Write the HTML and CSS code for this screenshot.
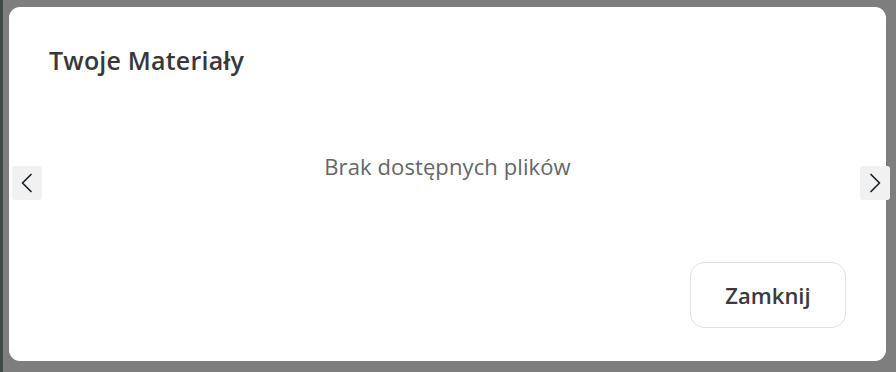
FILE: index.html
```html
<!DOCTYPE html>
<html lang="pl">
<head>
<meta charset="utf-8">
<title>Twoje Materiały</title>
<link rel="stylesheet" href="styles.css">
</head>
<body>
<div class="backdrop">
  <div class="dialog">
    <div class="dialog-header">
      <h2 class="dialog-title">Twoje Materiały</h2>
    </div>
    <div class="dialog-body">
      <p class="empty">Brak dostępnych plików</p>
    </div>
    <div class="dialog-footer">
      <button class="btn-close" type="button">Zamknij</button>
    </div>
  </div>
  <button class="nav nav-prev" type="button" aria-label="Poprzedni">
    <svg width="14" height="20" viewBox="0 0 14 20"><path d="M11 1.5 L2.5 10 L11 18.5" fill="none" stroke="#1f2326" stroke-width="1.7" stroke-linecap="round" stroke-linejoin="round"/></svg>
  </button>
  <button class="nav nav-next" type="button" aria-label="Następny">
    <svg width="14" height="20" viewBox="0 0 14 20"><path d="M3 1.5 L11.5 10 L3 18.5" fill="none" stroke="#1f2326" stroke-width="1.7" stroke-linecap="round" stroke-linejoin="round"/></svg>
  </button>
</div>
</body>
</html>
```

FILE: styles.css
```css
html, body {
  margin: 0;
  padding: 0;
  height: 100%;
}
body {
  background: #7e7e7e;
  font-family: "Open Sans", "Noto Sans", sans-serif;
  overflow: hidden;
}
.backdrop {
  position: relative;
  height: 372px;
  padding: 7px 10px 11px 6px;
  box-sizing: border-box;
  border-left: 3px solid #3d4a45;
}
.dialog {
  background: #ffffff;
  border-radius: 11px;
  height: 354px;
  display: flex;
  flex-direction: column;
  box-sizing: border-box;
  padding: 0 40px 33px 40px;
}
.dialog-header {
  padding-top: 37px;
}
.dialog-title {
  margin: 0;
  font-size: 25px;
  font-weight: 600;
  color: #383838;
  line-height: 32px;
  letter-spacing: 0.2px;
}
.dialog-body {
  flex: 1;
  display: flex;
  align-items: flex-start;
  justify-content: center;
  padding-top: 75px;
}
.empty {
  margin: 0;
  font-size: 22px;
  color: #666666;
  line-height: 30px;
  letter-spacing: 0.1px;
}
.dialog-footer {
  display: flex;
  justify-content: flex-end;
}
.btn-close {
  width: 156px;
  height: 66px;
  border: 1px solid #e2e2e2;
  border-radius: 14px;
  background: #ffffff;
  font-family: inherit;
  font-size: 22px;
  font-weight: 600;
  color: #3a3a3a;
  cursor: pointer;
}
.nav {
  position: absolute;
  top: 166px;
  width: 30px;
  height: 34px;
  border: none;
  border-radius: 3px;
  background: #eff1f3;
  display: flex;
  align-items: center;
  justify-content: center;
  padding: 0;
}
.nav-prev {
  left: 9px;
}
.nav-next {
  left: 857px;
}
```
